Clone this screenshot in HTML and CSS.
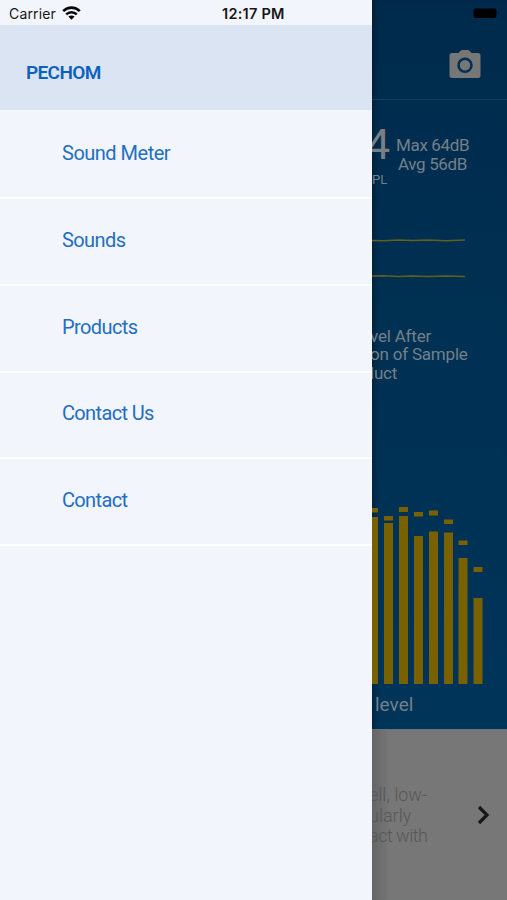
FILE: index.html
```html
<!DOCTYPE html>
<html lang="en">
<head>
<meta charset="utf-8">
<title>PECHOM</title>
<link rel="stylesheet" href="styles.css">
</head>
<body>
<div class="app">
  <aside class="drawer">
    <div class="status">
      <span class="carrier">Carrier</span>
      <svg class="wifi" width="19" height="14" viewBox="0 0 19 14"><g fill="none" stroke="#080808" stroke-width="2.6"><path d="M1.2 5.1C6 .5 13 .5 17.8 5.1"/><path d="M4.2 8.4c3-2.9 7.6-2.9 10.6 0"/></g><path d="M6.400 10.600c1.800-1.600 4.400-1.600 6.200 0L9.500 13.800z" fill="#080808"/></svg>
      <span class="clock">12:17 PM</span>
    </div>
    <header class="brand"><span>PECHOM</span></header>
    <nav>
      <a class="item i1">Sound Meter</a>
      <a class="item i2">Sounds</a>
      <a class="item i3">Products</a>
      <a class="item i4">Contact Us</a>
      <a class="item i5">Contact</a>
    </nav>
  </aside>
  <main class="pane">
    <div class="top">
      <svg class="battery" width="28" height="11" viewBox="0 0 28 11"><rect x=".5" y=".5" width="23" height="9.5" rx="2" fill="#000"/><path d="M25.5 3.5q2 1.8 0 3.6z" fill="#001c35"/></svg>
      <svg class="camera" width="32" height="28" viewBox="0 0 32 28"><path d="M3 3h6.500l2-2.200Q12.200 0 13.200 0h5.600q1 0 1.700.8l2 2.200H29q2.500 0 2.500 2.500v20Q31.500 28 29 28H3Q.5 28 .5 25.500v-20Q.5 3 3 3z" fill="#777778"/><circle cx="16" cy="15.200" r="6.500" fill="none" stroke="#002f55" stroke-width="2.600"/></svg>
    </div>
    <div class="readings">
      <div class="current"><span class="big">4</span><span class="unit">PL</span></div>
      <div class="stats"><span class="max">Max 64dB</span><span class="avg">Avg 56dB</span></div>
    </div>
    <svg class="waves" width="135" height="44" viewBox="0 0 135 44"><g fill="none" stroke="#61601c" stroke-width="1.500"><path d="M0 5.500l12 .3 14-.7 15 .5 15-.6 18 .7 19-.6"/><path d="M0 41l12-.2 14 .7 15-.6 15 .7 18-.7 19 .5"/></g></svg>
    <div class="caption"><span class="c1">vel After</span><span class="c2">on of Sample</span><span class="c3">luct</span></div>
    <svg class="chart" width="135" height="180" viewBox="0 0 135 180"><g fill="#7a6100">
      <path d="M0 4h6v4.500H0zM12 12h9v4.500h-9zM27 3h9v5h-9zM42 8h9v4.500h-9zM57 6.500h9v5h-9zM72 15.500h9v4.500h-9zM86.500 36.500h9v4.500h-9zM101.500 63h9v5h-9z"/>
      <path d="M0 13h6v167H0zM12 19h9v161h-9zM27 12h9v168h-9zM42 32h9v148h-9zM57 27.500h9V180h-9zM72 28.500h9V180h-9zM86.500 54h9v126h-9zM101.500 94h9v86h-9z"/></g></svg>
    <div class="level"><span>level</span></div>
    <div class="card">
      <div class="copy"><span class="p1">ell, low-</span><span class="p2">ularly</span><span class="p3">act with</span></div>
      <svg class="chevron" width="13" height="20" viewBox="0 0 13 20"><path d="M2 2l8 8-8 8" fill="none" stroke="#171717" stroke-width="3.200"/></svg>
    </div>
  </main>
</div>
</body>
</html>
```
FILE: styles.css
```css
* { box-sizing: border-box; }
body { margin: 0; font-family: Roboto, "Liberation Sans", sans-serif; }
span { white-space: nowrap; }
svg { display: block; flex: none; }
.app { display: flex; width: 507px; height: 900px; overflow: hidden; }
.drawer { width: 372px; flex: none; background: #f3f5fd; }
.status { height: 25px; display: flex; align-items: center; padding: 2px 0 0 9px; font-family: Inter, sans-serif; color: #161616; }
.carrier { width: 53px; font-size: 14px; letter-spacing: .15px; }
.wifi { margin-top: -2px; }
.clock { margin-left: 141px; font-size: 14.500px; font-weight: 600; letter-spacing: .25px; }
.brand { height: 85px; display: flex; align-items: center; padding: 9px 0 0 26px; background: #dbe4f2; color: #0b62bd; font-size: 19px; font-weight: 600; letter-spacing: -.65px; }
.item { display: flex; align-items: center; height: 86.800px; padding: 0 0 3px 62px; border-bottom: 2px solid #fdfeff; color: #226fc1; font-size: 20px; letter-spacing: -.5px; }
.item.i1 { height: 89px; padding-bottom: 1px; }
.item.i2, .item.i3 { letter-spacing: -.6px; }
.item.i4, .item.i5 { letter-spacing: -.65px; }
.pane { flex: 1; min-width: 0; overflow: hidden; display: flex; flex-direction: column; background: linear-gradient(#002a4c, #003052 35%, #003459 80%); color: #73808a; box-shadow: inset 5px 0 6px -3px rgba(0, 0, 0, .35); }
.top { height: 100px; flex: none; border-bottom: 1px solid #163d54; padding-top: 8px; }
.battery { margin-left: 101px; }
.camera { margin: 31px 0 0 77px; }
.readings { height: 135px; flex: none; display: flex; }
.current { width: 24px; padding-top: 21px; display: flex; flex-direction: column; }
.big { height: 45px; line-height: 46px; font-size: 43px; font-weight: 400; margin-left: -6px; color: #7b7e82; }
.unit { font-size: 13px; line-height: 16px; margin-top: 6px; }
.stats { display: flex; flex-direction: column; padding-top: 36px; font-size: 17px; line-height: 18.500px; letter-spacing: -.35px; }
.avg { margin-left: 2px; }
.waves { flex: none; }
.caption { height: 225px; flex: none; padding-top: 48px; display: flex; flex-direction: column; font-size: 17px; line-height: 18.300px; margin-left: -2px; letter-spacing: -.2px; }
.level { height: 45px; flex: none; font-size: 19px; line-height: 41px; padding-left: 3px; }
.card { flex: 1; display: flex; background: linear-gradient(90deg, #656565, #777 18px); border-top: 1px solid #66747c; color: #55575a; }
.copy { width: 104px; padding-top: 55px; display: flex; flex-direction: column; margin-left: -3px; font-size: 18px; font-weight: 300; line-height: 20.500px; }
.p3 { letter-spacing: -.5px; }
.chevron { margin: 75px 0 0 4px; }
```
